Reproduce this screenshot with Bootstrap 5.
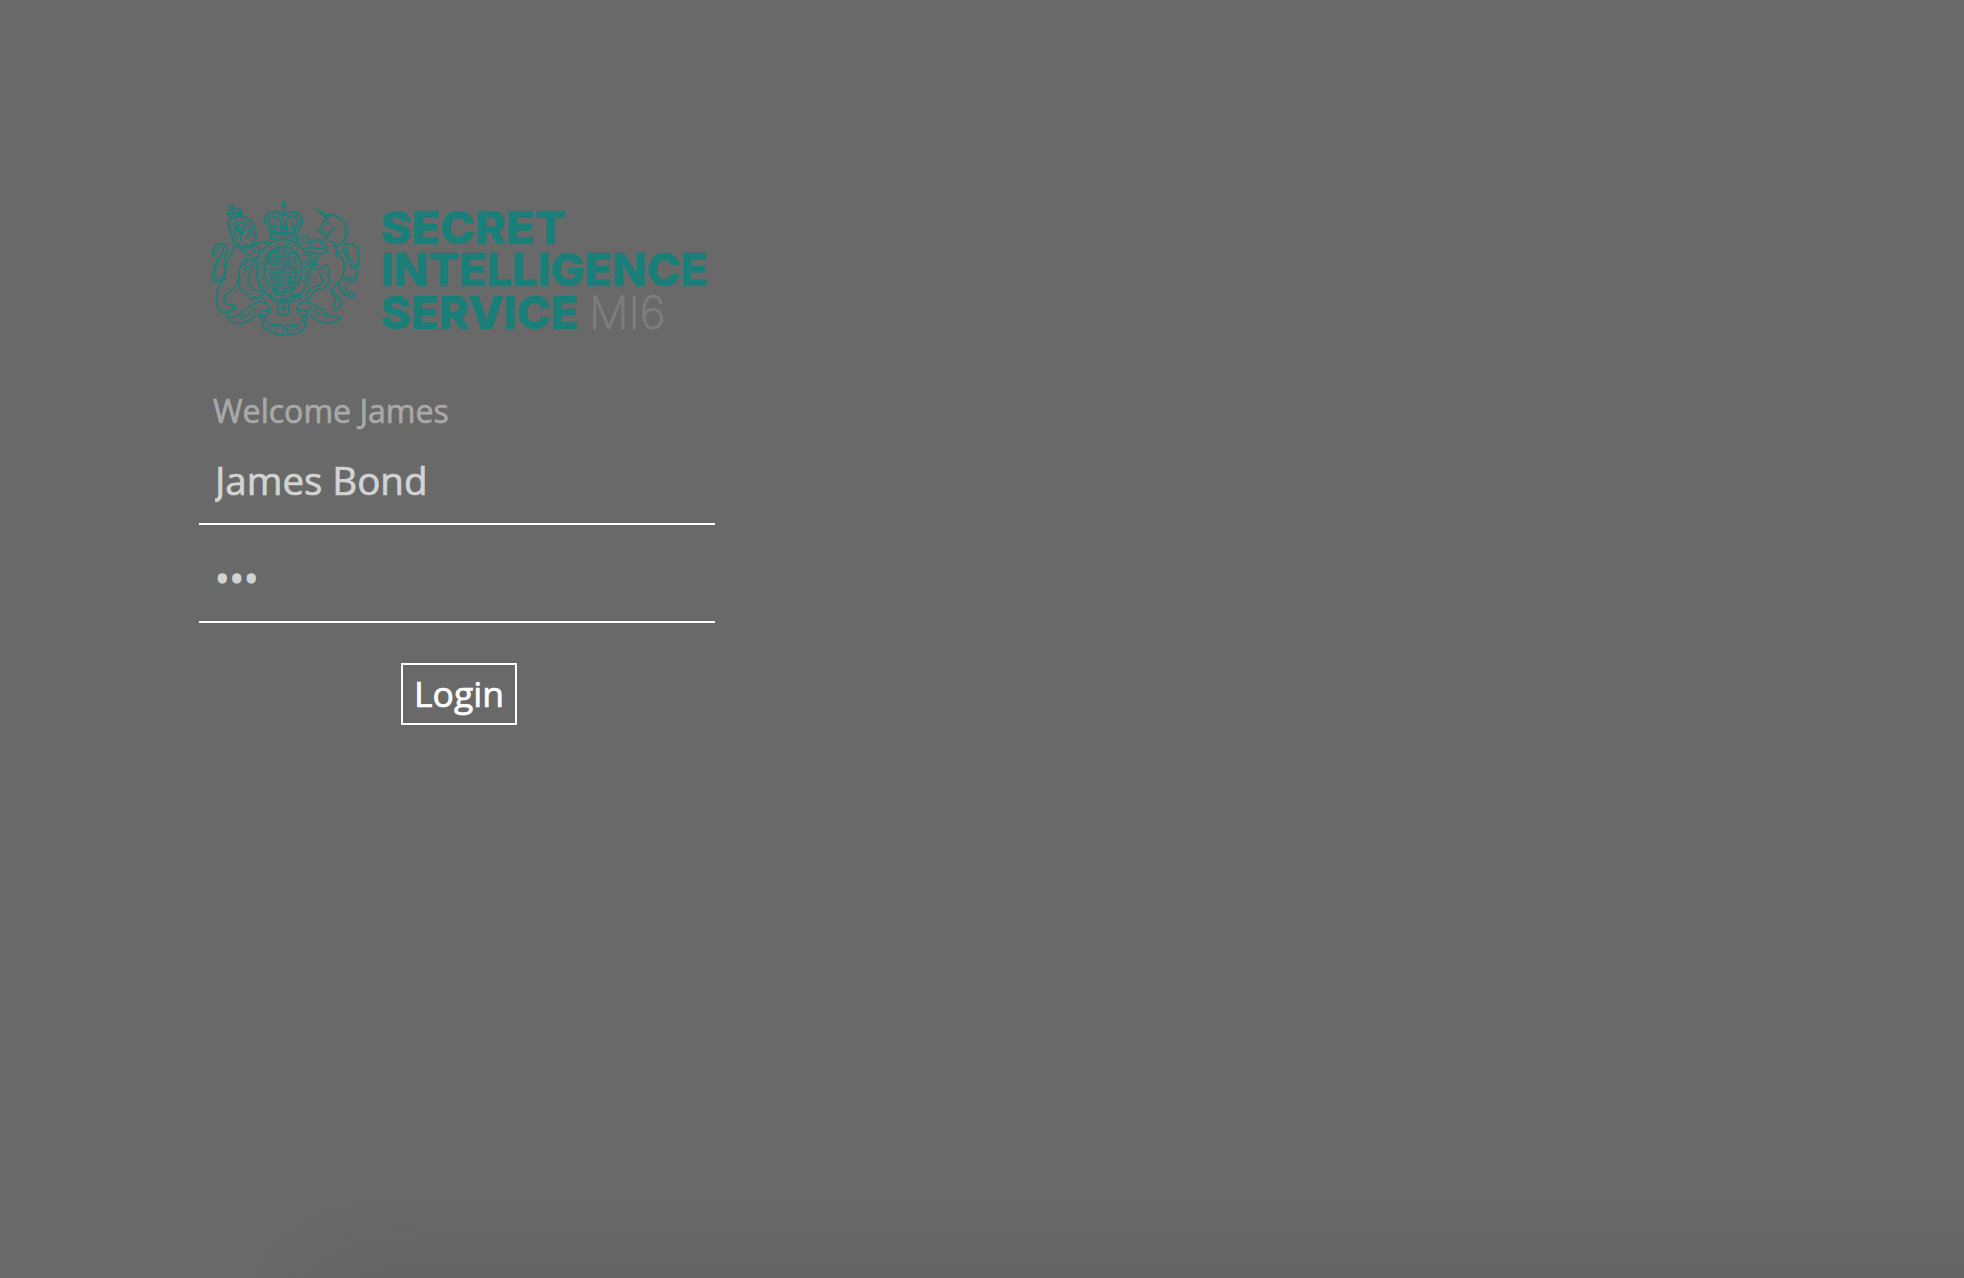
<!DOCTYPE html>
<html lang="en">
<head>
<meta charset="utf-8">
<meta name="viewport" content="width=device-width, initial-scale=1">
<title>Secret Intelligence Service – Login</title>
<link href="https://cdn.jsdelivr.net/npm/bootstrap@5.3.0/dist/css/bootstrap.min.css" rel="stylesheet">
<style>
  body { background: #696969; font-family: "Open Sans", "Noto Sans", sans-serif; }
  .login-page { padding: 190px 0 0 199px; }
  .login-panel { width: 516px; }
  .sis-logo { width: 520px; height: 156px; margin-left: 1px; }
  .greeting { font-size: 32.1px; line-height: 44px; color: #a9a9a9; padding-left: 14px; margin-top: 43px; -webkit-text-stroke: .6px; }
  .login-field, .login-field:focus { height: 98px; padding: 10px 0 0 16px; font-size: 38.5px; line-height: 54px; color: #d3d3d3; background: transparent; border: 0; border-bottom: 2px solid #fff; border-radius: 0; box-shadow: none; -webkit-text-stroke: .7px; }
  .field-user, .field-user:focus { height: 92px; padding-top: 4px; padding-bottom: 0; }
  .field-pass { -webkit-text-stroke: 1.2px; }
  .btn-login { width: 116px; height: 62px; margin: 40px 0 0 202px; padding: 0 0 2px; font-size: 35.5px; line-height: 54px; color: #fff; border: 2px solid #fff; border-radius: 0; -webkit-text-stroke: .7px; }
  .shade-clip { inset: 0; pointer-events: none; }
  .bottom-shade { left: 333px; right: -120px; bottom: -66px; height: 50px; box-shadow: 0 0 90px 10px rgba(0,0,0,.13); }
</style>
<script src="https://cdn.jsdelivr.net/npm/bootstrap@5.3.0/dist/js/bootstrap.bundle.min.js"></script>
</head>
<body class="vh-100 overflow-hidden position-relative">
<main class="login-page">
  <div class="login-panel d-flex flex-column">
    <svg class="sis-logo d-block" viewBox="0 0 1560 468" role="img" aria-label="Secret Intelligence Service MI6">
      <g fill="none" stroke="#1a7f78" stroke-width="4.8" stroke-linejoin="round" stroke-linecap="round">
        <!-- lion's crown and head -->
        <path d="M89 86L82 65Q85 57 94 61L97 53L103 60Q115 52 122 61L124 79Q105 77 89 86ZM96 45V52M91 49H101M97 60L102 79M85 66L99 72L121 66M89 79Q105 70 124 74"/>
        <path d="M91 89L83 101L91 107L86 119L94 124L91 138L99 142L98 157L107 155L109 170L117 162L121 179L129 163L137 178L142 164L151 174L153 160L164 164L161 150L171 147L164 136L169 125L162 119L163 106L155 104L154 91L145 91L139 80L128 83L123 77L104 81Z"/>
        <path d="M101 103Q108 92 116 99M123 98Q134 91 138 104M105 107L112 109M125 107L134 106M116 106L114 119L124 120L129 114M108 119Q119 137 136 120M116 128L124 134L132 127M104 113L102 130L111 147M144 107L147 125L139 146M122 139L123 154M154 113L155 139"/>
        <!-- lion's body, legs and tail -->
        <path d="M104 163Q101 182 86 202Q76 222 78 240Q76 262 52 300L50 322Q47 345 61 367L73 370L78 362L86 371L90 361L98 365L96 355L108 357L105 346Q94 340 83 346Q70 334 73 317Q98 300 118 272"/>
        <path d="M116 272Q118 240 118 240Q126 222 134 206Q150 205 158 222Q156 246 146 258Q140 272 148 286L160 300Q178 304 192 310L184 316L188 326L178 320L171 328L164 320L154 329L146 318L132 302L120 296Q112 280 118 262"/>
        <path d="M153 164Q158 178 166 188L184 184L201 166M163 205L180 198M157 167L178 157L205 158M171 164L181 185M134 206L142 216L132 224L144 232L132 238L142 246M170 246L174 278L184 296M122 176Q132 190 150 196Q166 210 172 232"/>
        <path d="M77 240Q64 216 82 183Q82 160 63 160Q43 162 37 185L40 198Q48 171 65 171Q73 174 68 188Q38 223 36 260Q38 275 54 276L77 266M68 188L48 225Q43 249 49 262L65 264L73 250M37 260L34 269L43 267M48 272L50 280"/>
        <!-- royal crown -->
        <path d="M250 38V73M243 43H257M247 38H253M246 51H254M250 58L245 63L250 68L255 63Z" stroke-width="4"/>
        <path d="M208 130L203 109Q185 88 202 73Q229 58 248 79Q273 57 297 74Q316 91 298 111L292 130ZM216 124L211 105Q199 90 214 81Q234 75 242 91V122M284 124L289 105Q302 90 286 80Q267 74 258 91V122"/>
        <path d="M192 96L198 77L208 68L224 65L239 69L250 79L264 68L279 65L293 69L303 80L306 93L300 107" stroke-width="8" stroke-dasharray="1 9"/>
        <path d="M209 132Q250 122 292 132L289 147Q250 138 211 147ZM213 113L221 106L229 116L221 123ZM237 112H263M250 98V124M241 103L259 121M259 103L241 121M271 116L279 106L288 114L279 123ZM221 104V93M279 104V93"/>
        <path d="M215 138Q250 131 287 138" stroke-width="5" stroke-dasharray="4 9"/>
        <!-- garter and shield -->
        <ellipse cx="250" cy="240" rx="81" ry="91"/>
        <ellipse cx="250" cy="239" rx="56" ry="69" stroke-width="5"/>
        <path d="M250 171V305M196 239H304" stroke-width="5"/>
        <path d="M203 190Q213 183 220 190L239 187M199 201L211 196L221 203L241 199M197 211L209 207L222 213L241 209M199 222L213 218L223 226L242 220M212 184L222 179L239 180M212 190L207 198M226 186L234 195M215 206L209 214M228 205L236 213M222 221L214 229M231 218L237 228"/>
        <path d="M256 263L267 256L278 262L294 257M257 273L270 269L281 276L291 268M256 285L267 281L278 287L287 279M256 297L268 291L279 295M272 258L265 268M284 259L290 267M272 274L264 281M281 276L287 282M256 249H296"/>
        <path d="M265 189L276 192L281 184L289 198L278 204L289 211L285 218L276 213L272 226L262 222L270 211L262 207L270 202ZM279 207L291 226M258 180V232H297" stroke-width="4"/>
        <path d="M209 251L240 247V285L229 298Q211 276 209 251ZM217 256L232 288M226 253L236 276"/>
        <path d="M219 302L211 315L217 333L292 335L304 319L279 311L252 302M221 312Q257 318 299 320M218 302L248 309M233 340V371Q250 380 267 371V340ZM241 355H259M250 346V369"/>
        <circle cx="246" cy="325" r="2"/><circle cx="274" cy="326" r="2"/>
        <!-- mantling -->
        <path d="M286 158Q300 139 320 142L337 160L320 174M295 165Q308 151 323 157M330 158L350 147L371 158M320 172L371 176L386 181M316 181L343 191L369 190L385 181M326 191L345 210L352 228L341 223L325 207"/>
        <!-- unicorn -->
        <path d="M388 79L350 58L380 87M365 67L369 76M375 72L378 80M382 84L392 70L397 79L407 75L411 83L421 83L424 93L435 96L432 106L443 112L436 121L443 131L433 136L438 148L427 151L425 164L415 160L408 174L401 160L391 155"/>
        <path d="M380 87L371 95L367 107L355 121Q359 133 370 130L374 135L386 134L396 119L408 111M380 102L388 97M361 123L369 120M386 137L372 148L366 160L382 170M403 160L410 182L408 202"/>
        <path d="M360 190Q352 206 338 218Q332 232 344 240L362 236L382 226M386 236Q384 256 388 276Q382 290 368 296L344 302L332 318L320 330L315 324L324 306Q334 292 352 288L370 276Q362 262 358 248M410 181L423 198L432 216Q436 252 419 273L401 292L396 307L413 320L425 338L421 350L406 360L400 350L409 332L400 314L389 296M420 272L415 290L430 311L447 316M434 290L440 304L433 318"/>
        <path d="M434 183L427 185Q425 166 440 162Q462 157 474 176L477 230L470 223L464 237L451 228L440 204ZM439 174Q440 200 468 233M432 261L443 276L460 274L472 258L467 240M441 260L449 268L461 260"/>
        <circle cx="454" cy="315" r="7"/>
        <!-- motto ribbon -->
        <path d="M80 380Q107 386 126 367Q152 344 178 335Q206 335 210 356Q211 373 197 378Q183 379 179 367Q184 358 196 362L207 360M80 380Q95 403 124 401Q148 395 164 380L179 372M179 367L190 413Q203 430 250 434Q299 434 313 416L320 372M189 379L200 398Q250 415 306 398L312 379"/>
        <path d="M422 380Q394 386 375 367Q350 344 325 335Q297 334 291 356Q290 373 305 378Q317 379 322 366Q316 358 306 362L293 360M422 380Q406 404 378 400Q354 394 338 380L322 371"/>
      </g>
      <defs>
        <path id="garterArc" d="M208 297A62 75 0 1 1 292 297"/>
        <path id="dieuArc" d="M122 391Q151 382 182 354"/>
        <path id="droitArc" d="M319 354Q351 383 392 394"/>
        <path id="monArc" d="M203 419Q250 432 306 418"/>
      </defs>
      <g fill="#1a7f78" font-family="Inter, sans-serif" font-weight="700" font-size="17">
        <text font-size="16" letter-spacing="3.6"><textPath href="#garterArc">HONI SOIT QUI MAL Y PENSE</textPath></text>
        <text font-size="19" letter-spacing="4"><textPath href="#dieuArc">DIEU</textPath></text>
        <text font-size="18" letter-spacing="4"><textPath href="#droitArc">DROIT</textPath></text>
        <text font-size="20" letter-spacing="3.6"><textPath href="#monArc">ET MON</textPath></text>
      </g>
      <g fill="#1a7f78" stroke="#1a7f78" stroke-width="1.5" font-family="Inter, 'Liberation Sans', sans-serif" font-weight="800" font-size="137">
        <text x="541" y="161" textLength="557" lengthAdjust="spacingAndGlyphs">SECRET</text>
        <text x="542" y="289" textLength="981" lengthAdjust="spacingAndGlyphs">INTELLIGENCE</text>
        <text x="541" y="416" textLength="594" lengthAdjust="spacingAndGlyphs">SERVICE</text>
      </g>
      <text x="1167" y="416" fill="#7e7e7e" stroke="#7e7e7e" stroke-width="2.5" font-family="Inter, sans-serif" font-weight="200" font-size="137" textLength="229" lengthAdjust="spacingAndGlyphs">MI6</text>
    </svg>
    <div class="greeting">Welcome James</div>
    <form class="d-flex flex-column align-items-start">
      <input class="form-control login-field field-user" type="text" value="James Bond" aria-label="Username">
      <input class="form-control login-field field-pass" type="password" value="007" aria-label="Password">
      <button class="btn btn-login" type="button">Login</button>
    </form>
  </div>
</main>
<div class="shade-clip position-absolute overflow-hidden"><div class="bottom-shade position-absolute"></div></div>
</body>
</html>
